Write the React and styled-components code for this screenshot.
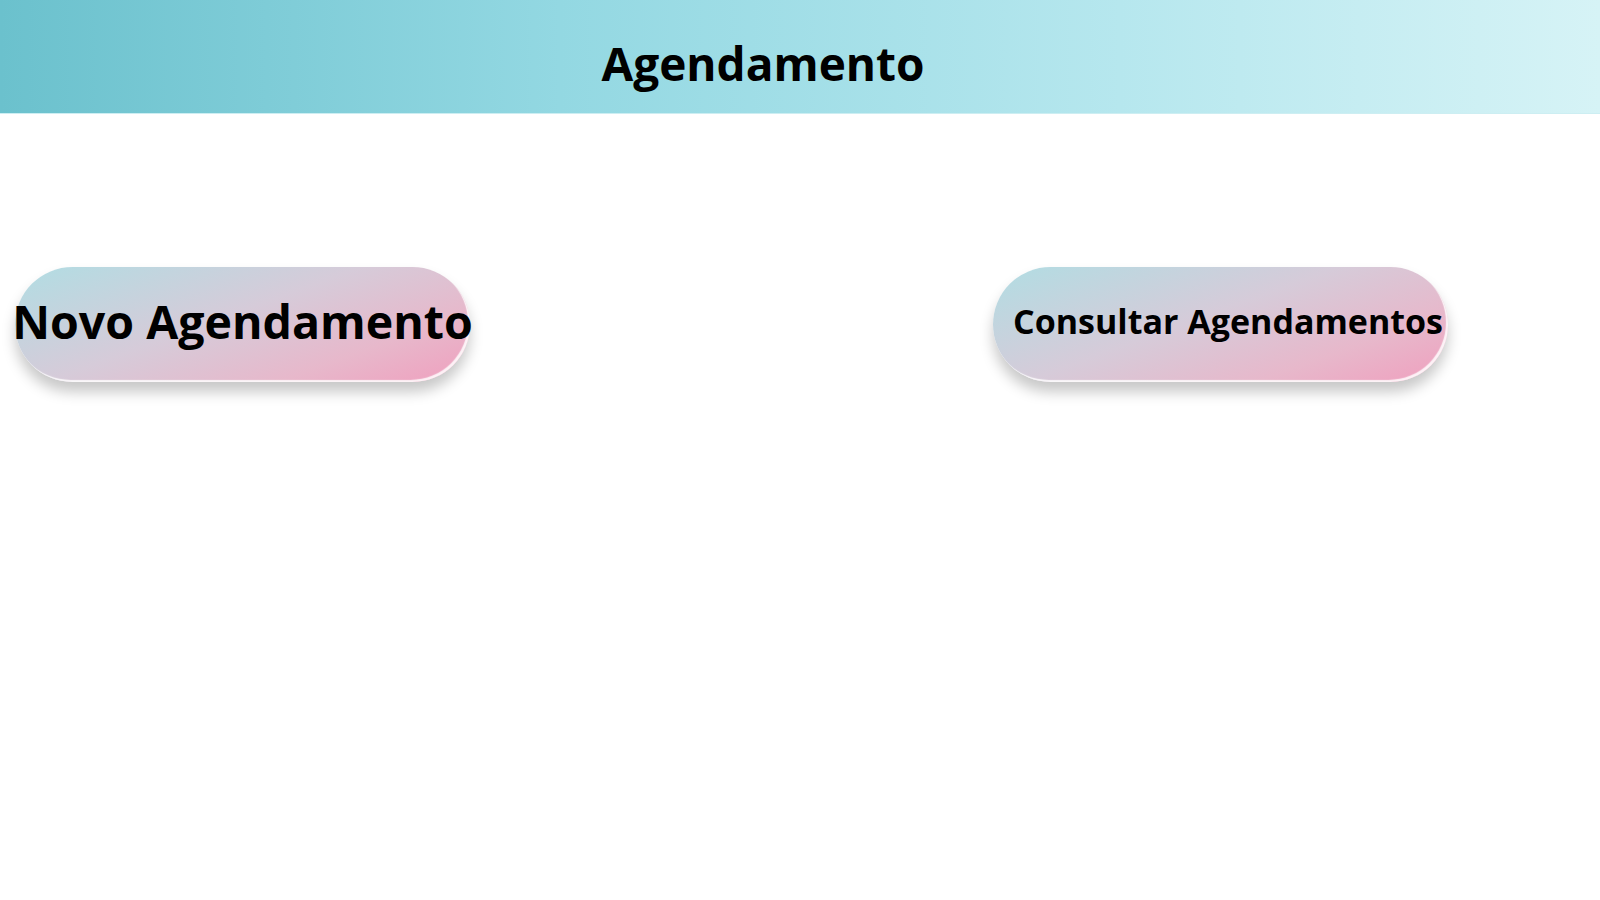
import React from 'react';
import styled, { createGlobalStyle } from 'styled-components';

const GlobalStyle = createGlobalStyle`
    html, body {
        margin: 0;
        padding: 0;
        background: #ffffff;
        font-family: "Open Sans", "Noto Sans", sans-serif;
    }
`;

const Header = styled.header`
    height: 114px;
    box-sizing: border-box;
    display: flex;
    align-items: center;
    justify-content: center;
    padding: 12px 74px 0 0;
    background: linear-gradient(90deg, #6bc1cd 0%, #93d8e2 35%, #b6e7ee 70%, #d6f3f6 100%);
    border-bottom: 1px solid #cdeef2;
`;

const Title = styled.h1`
    margin: 0;
    font-size: 46px;
    font-weight: 700;
    color: #000;
`;

const Actions = styled.div`
    display: flex;
    align-items: center;
    gap: 523px;
    padding: 153px 0 60px 15px;
`;

const PillButton = styled.button`
    width: 455px;
    height: 115px;
    box-sizing: border-box;
    border-radius: 58px;
    border: none;
    display: flex;
    align-items: center;
    justify-content: ${p => (p.$big ? 'center' : 'flex-end')};
    padding: 0 ${p => (p.$big ? '0' : '5px')} 8px 0;
    white-space: nowrap;
    overflow: visible;
    font-family: "Open Sans", "Noto Sans", sans-serif;
    font-weight: 700;
    font-size: ${p => (p.$big ? '46.5px' : '34px')};
    color: #000;
    background: linear-gradient(160deg, #b1dde3 0%, #d6cbd9 45%, #e7b8cb 75%, #f09fbe 100%);
    box-shadow:
        inset -2px -2px 1px rgba(255, 255, 255, 0.85),
        0 10px 14px rgba(0, 0, 0, 0.22);
    cursor: pointer;
`;

const App = () => {
    return (
        <>
            <GlobalStyle />
            <Header>
                <Title>Agendamento</Title>
            </Header>
            <Actions>
                <PillButton $big>Novo Agendamento</PillButton>
                <PillButton>Consultar Agendamentos</PillButton>
            </Actions>
        </>
    );
};

export default App;
